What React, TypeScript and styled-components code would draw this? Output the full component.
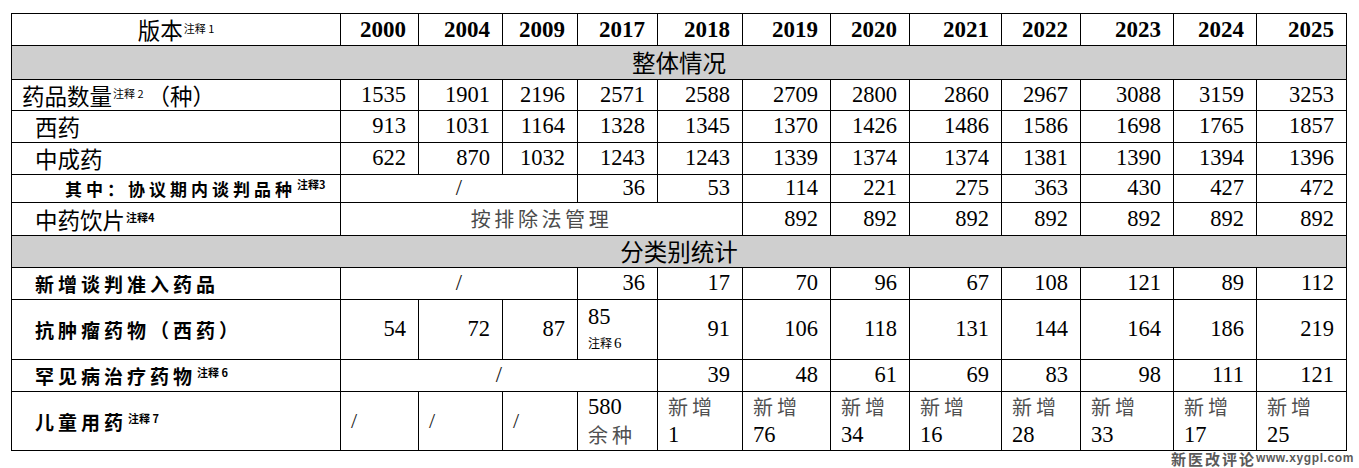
import styled, { createGlobalStyle } from 'styled-components';

const GlobalStyle = createGlobalStyle`
  html, body { margin: 0; padding: 0; background: #fff; }
  body { font-family: 'Liberation Serif', 'Noto Sans CJK SC', serif; color: #000; }
`;

const COLS = [329, 78, 84, 75, 80, 85, 88, 79, 92, 79, 93, 83, 90];
const YEARS = ['2000', '2004', '2009', '2017', '2018', '2019', '2020', '2021', '2022', '2023', '2024', '2025'];

const Page = styled.div`
  width: 1359px;
  padding: 13px 0 0 11px;
  box-sizing: border-box;
`;

const Sheet = styled.table`
  width: 1335px;
  border-collapse: collapse;
  table-layout: fixed;
  td, th {
    border: 1px solid #000;
    padding: 0;
    white-space: nowrap;
    line-height: 1;
  }
`;

const Row = styled.tr<{ $h: number }>`
  height: ${p => p.$h}px;
`;

const Label = styled.td<{ $indent: number; $strong?: boolean; $small?: boolean }>`
  padding-left: ${p => p.$indent}px !important;
  font-family: 'Noto Sans CJK SC', sans-serif;
  font-size: ${p => (p.$small ? '17px' : p.$strong ? '19px' : '22.5px')};
  font-weight: ${p => (p.$strong ? 700 : 400)};
  letter-spacing: ${p => (p.$strong ? '4px' : '0')};
  text-align: left;
  vertical-align: middle;
`;

const Corner = styled.th`
  font-family: 'Noto Sans CJK SC', sans-serif;
  font-size: 22.5px;
  font-weight: 400;
  text-align: center;
`;

const Year = styled.th`
  font-family: 'Liberation Serif', serif;
  font-size: 23px;
  font-weight: 700;
  text-align: right;
  padding-right: 12px !important;
`;

const Num = styled.td`
  font-family: 'Liberation Serif', serif;
  font-size: 22.5px;
  text-align: right;
  padding-right: 12px !important;
  vertical-align: middle;
`;

const Section = styled.td`
  background: #cfcfcf;
  font-family: 'Noto Sans CJK SC', sans-serif;
  font-size: 23.5px;
  text-align: center;
  vertical-align: middle;
`;

const Merged = styled.td<{ $muted?: boolean }>`
  text-align: center;
  vertical-align: middle;
  font-family: ${p => (p.$muted ? "'Noto Sans CJK SC', sans-serif" : "'Liberation Serif', serif")};
  font-size: ${p => (p.$muted ? '20px' : '22.5px')};
  letter-spacing: ${p => (p.$muted ? '3.6px' : '0')};
  color: ${p => (p.$muted ? '#4a4a4a' : '#111')};
`;

const Slash = styled.td`
  font-family: 'Liberation Serif', serif;
  font-size: 22px;
  color: #222;
  text-align: left;
  padding-left: 10px !important;
  vertical-align: middle;
`;

const Stack = styled.td<{ $top?: boolean }>`
  text-align: left;
  padding-left: 10px !important;
  vertical-align: ${p => (p.$top ? 'top' : 'middle')};
  padding-top: ${p => (p.$top ? '3px' : '0')} !important;
`;

const Line = styled.div<{ $cjk?: boolean }>`
  font-family: ${p => (p.$cjk ? "'Noto Sans CJK SC', sans-serif" : "'Liberation Serif', serif")};
  font-size: ${p => (p.$cjk ? '20px' : '22.5px')};
  letter-spacing: ${p => (p.$cjk ? '4px' : '0')};
  color: ${p => (p.$cjk ? '#505050' : '#000')};
  line-height: 28px;
`;

const SmallNote = styled.div`
  line-height: 24px;
  font-size: 12px;
  font-family: 'Noto Sans CJK SC', sans-serif;
  span {
    font-family: 'Liberation Serif', serif;
    font-size: 15px;
    margin-left: 2px;
  }
`;

const Note = styled.sup<{ $strong?: boolean; $gap?: number }>`
  font-family: 'Noto Sans CJK SC', sans-serif;
  font-size: 11px;
  font-weight: ${p => (p.$strong ? 700 : 400)};
  letter-spacing: 0;
  line-height: 0;
  vertical-align: 0.6em;
  margin-left: 1px;
  margin-right: ${p => p.$gap ?? 0}px;
`;

const Mark = styled.div`
  display: flex;
  justify-content: flex-end;
  padding-right: 5px;
  margin-top: -1px;
  color: #5a5a5a;
  font-weight: 700;
  line-height: 17px;
  span:first-child {
    font-family: 'Noto Sans CJK SC', sans-serif;
    font-size: 15px;
    letter-spacing: 2px;
  }
  span:last-child {
    font-family: 'Liberation Sans', sans-serif;
    font-size: 12px;
    letter-spacing: 0.6px;
  }
`;

const nums = (vals: number[]) => vals.map((v, i) => <Num key={i}>{v}</Num>);

export default function App() {
  return (
    <Page>
      <GlobalStyle />
      <Sheet>
        <colgroup>
          {COLS.map((w, i) => <col key={i} style={{ width: w }} />)}
        </colgroup>
        <tbody>
          <Row $h={32}>
            <Corner>版本<Note>注释 1</Note></Corner>
            {YEARS.map(y => <Year key={y}>{y}</Year>)}
          </Row>
          <Row $h={34}>
            <Section colSpan={13}>整体情况</Section>
          </Row>
          <Row $h={31}>
            <Label $indent={10}>药品数量<Note $gap={4}>注释 2</Note>（种）</Label>
            {nums([1535, 1901, 2196, 2571, 2588, 2709, 2800, 2860, 2967, 3088, 3159, 3253])}
          </Row>
          <Row $h={32}>
            <Label $indent={23}>西药</Label>
            {nums([913, 1031, 1164, 1328, 1345, 1370, 1426, 1486, 1586, 1698, 1765, 1857])}
          </Row>
          <Row $h={32}>
            <Label $indent={23}>中成药</Label>
            {nums([622, 870, 1032, 1243, 1243, 1339, 1374, 1374, 1381, 1390, 1394, 1396])}
          </Row>
          <Row $h={28}>
            <Label $indent={53} $strong $small>
              其中：协议期内谈判品种<Note $strong>注释3</Note>
            </Label>
            <Merged colSpan={3}>/</Merged>
            {nums([36, 53, 114, 221, 275, 363, 430, 427, 472])}
          </Row>
          <Row $h={33}>
            <Label $indent={23}>中药饮片<Note $strong>注释4</Note></Label>
            <Merged colSpan={5} $muted>按排除法管理</Merged>
            {nums([892, 892, 892, 892, 892, 892, 892])}
          </Row>
          <Row $h={32}>
            <Section colSpan={13}>分类别统计</Section>
          </Row>
          <Row $h={32}>
            <Label $indent={23} $strong>新增谈判准入药品</Label>
            <Merged colSpan={3}>/</Merged>
            {nums([36, 17, 70, 96, 67, 108, 121, 89, 112])}
          </Row>
          <Row $h={60}>
            <Label $indent={23} $strong>抗肿瘤药物（西药）</Label>
            {nums([54, 72, 87])}
            <Stack $top>
              <Line>85</Line>
              <SmallNote>注释<span>6</span></SmallNote>
            </Stack>
            {nums([91, 106, 118, 131, 144, 164, 186, 219])}
          </Row>
          <Row $h={32}>
            <Label $indent={23} $strong>罕见病治疗药物<Note $strong>注释 6</Note></Label>
            <Merged colSpan={4}>/</Merged>
            {nums([39, 48, 61, 69, 83, 98, 111, 121])}
          </Row>
          <Row $h={59}>
            <Label $indent={23} $strong>儿童用药<Note $strong>注释 7</Note></Label>
            <Slash>/</Slash>
            <Slash>/</Slash>
            <Slash>/</Slash>
            <Stack>
              <Line>580</Line>
              <Line $cjk>余种</Line>
            </Stack>
            {[1, 76, 34, 16, 28, 33, 17, 25].map((v, i) => (
              <Stack key={i}>
                <Line $cjk>新增</Line>
                <Line>{v}</Line>
              </Stack>
            ))}
          </Row>
        </tbody>
      </Sheet>
      <Mark>
        <span>新医改评论</span>
        <span>www.xygpl.com</span>
      </Mark>
    </Page>
  );
}
